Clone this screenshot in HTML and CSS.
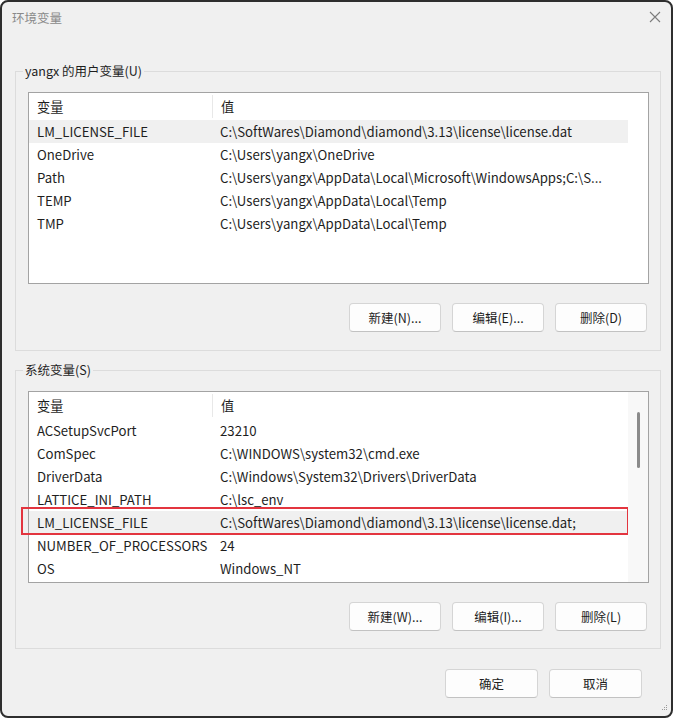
FILE: index.html
```html
<!DOCTYPE html>
<html lang="zh-CN">
<head>
  <meta charset="UTF-8">
  <meta name="viewport" content="width=device-width, initial-scale=1.0">
  <title>环境变量</title>
  <link rel="stylesheet" href="styles.css">
</head>
<body>
  <div class="window">
    <div class="titlebar">
      <span class="titlebar__text">环境变量</span>
      <svg class="titlebar__close" width="12" height="12" viewBox="0 0 12 12">
        <path d="M1 1 L11 11 M11 1 L1 11" stroke="#7c7c7c" stroke-width="1.1" fill="none"/>
      </svg>
    </div>

    <fieldset class="group group--user">
      <legend class="group__label">yangx 的用户变量(U)</legend>
      <div class="list">
        <div class="list__body">
          <div class="list__head">
            <div class="list__cell list__cell--name">变量</div>
            <div class="list__cell list__cell--value">值</div>
          </div>
          <div class="list__row list__row--selected">
            <div class="list__cell list__cell--name">LM_LICENSE_FILE</div>
            <div class="list__cell list__cell--value">C:\SoftWares\Diamond\diamond\3.13\license\license.dat</div>
          </div>
          <div class="list__row">
            <div class="list__cell list__cell--name">OneDrive</div>
            <div class="list__cell list__cell--value">C:\Users\yangx\OneDrive</div>
          </div>
          <div class="list__row">
            <div class="list__cell list__cell--name">Path</div>
            <div class="list__cell list__cell--value">C:\Users\yangx\AppData\Local\Microsoft\WindowsApps;C:\S...</div>
          </div>
          <div class="list__row">
            <div class="list__cell list__cell--name">TEMP</div>
            <div class="list__cell list__cell--value">C:\Users\yangx\AppData\Local\Temp</div>
          </div>
          <div class="list__row">
            <div class="list__cell list__cell--name">TMP</div>
            <div class="list__cell list__cell--value">C:\Users\yangx\AppData\Local\Temp</div>
          </div>
        </div>
        <div class="list__scroll"></div>
      </div>
      <div class="buttons">
        <button class="btn">新建(N)...</button>
        <button class="btn">编辑(E)...</button>
        <button class="btn">删除(D)</button>
      </div>
    </fieldset>

    <fieldset class="group group--system">
      <legend class="group__label">系统变量(S)</legend>
      <div class="list">
        <div class="list__body">
          <div class="list__head">
            <div class="list__cell list__cell--name">变量</div>
            <div class="list__cell list__cell--value">值</div>
          </div>
          <div class="list__row">
            <div class="list__cell list__cell--name">ACSetupSvcPort</div>
            <div class="list__cell list__cell--value">23210</div>
          </div>
          <div class="list__row">
            <div class="list__cell list__cell--name">ComSpec</div>
            <div class="list__cell list__cell--value">C:\WINDOWS\system32\cmd.exe</div>
          </div>
          <div class="list__row">
            <div class="list__cell list__cell--name">DriverData</div>
            <div class="list__cell list__cell--value">C:\Windows\System32\Drivers\DriverData</div>
          </div>
          <div class="list__row">
            <div class="list__cell list__cell--name">LATTICE_INI_PATH</div>
            <div class="list__cell list__cell--value">C:\lsc_env</div>
          </div>
          <div class="list__row list__row--selected list__row--marked">
            <div class="list__cell list__cell--name">LM_LICENSE_FILE</div>
            <div class="list__cell list__cell--value">C:\SoftWares\Diamond\diamond\3.13\license\license.dat;</div>
          </div>
          <div class="list__row">
            <div class="list__cell list__cell--name">NUMBER_OF_PROCESSORS</div>
            <div class="list__cell list__cell--value">24</div>
          </div>
          <div class="list__row">
            <div class="list__cell list__cell--name">OS</div>
            <div class="list__cell list__cell--value">Windows_NT</div>
          </div>
        </div>
        <div class="list__scroll list__scroll--track">
          <div class="list__thumb"></div>
        </div>
      </div>
      <div class="buttons">
        <button class="btn">新建(W)...</button>
        <button class="btn">编辑(I)...</button>
        <button class="btn">删除(L)</button>
      </div>
    </fieldset>

    <div class="footer">
      <button class="btn btn--wide">确定</button>
      <button class="btn btn--wide">取消</button>
    </div>

    <svg class="grip" width="8" height="8" viewBox="0 0 8 8">
      <rect x="6" y="0" width="1" height="1" fill="#9a9a9a"/>
      <rect x="4" y="2" width="1" height="1" fill="#9a9a9a"/>
      <rect x="6" y="2" width="1" height="1" fill="#9a9a9a"/>
      <rect x="2" y="4" width="1" height="1" fill="#9a9a9a"/>
      <rect x="4" y="4" width="1" height="1" fill="#9a9a9a"/>
      <rect x="6" y="4" width="1" height="1" fill="#9a9a9a"/>
    </svg>
  </div>
</body>
</html>
```

FILE: styles.css
```css
body{
  margin: 0;
  background: #fff;
  font-family: "Noto Sans CJK SC", "Noto Sans", sans-serif;
  font-size: 13.2px;
  color: #1e1e1e;
}

.window{
  position: relative;
  width: 673px;
  height: 718px;
  box-sizing: border-box;
  border: 2px solid #2e2e2e;
  border-radius: 8px;
  background: #f0f0f0;
  padding: 0 10px 0 13px;
  display: flex;
  flex-direction: column;
}

.titlebar{
  height: 30px;
  margin: 0 -10px 30px -13px;
  padding: 0 10px 0 10px;
  display: flex;
  align-items: center;
  justify-content: space-between;
}
.titlebar__text{
  color: #8a8a8a;
  font-size: 12.5px;
}

.group{
  margin: 0;
  padding: 12px 11px 18px 12px;
  border: 1px solid #dcdcdc;
  min-width: 0;
}
.group--system{
  margin-top: 10px;
  padding-bottom: 17px;
}
.group__label{
  padding: 0 2px;
  margin-left: -5px;
  line-height: 18px;
  font-size: 12.5px;
}

.list{
  height: 192px;
  box-sizing: border-box;
  border: 1px solid #a3a3a3;
  background: #fff;
  display: flex;
}
.list__body{
  flex: 1;
  min-width: 0;
}
.list__scroll{
  width: 20px;
  position: relative;
}
.list__scroll--track{
  background: #f8f8f8;
}
.list__thumb{
  position: absolute;
  left: 9px;
  top: 20px;
  width: 3px;
  height: 56px;
  border-radius: 2px;
  background: #8a8a8a;
}

.list__head{
  height: 27px;
  display: flex;
  align-items: center;
}
.list__head .list__cell--value{
  border-left: 1px solid #e8e8e8;
  height: 23px;
  line-height: 23px;
}

.list__row{
  height: 23px;
  display: flex;
  align-items: center;
}
.list__row--selected{
  background: #f0f0f0;
}
.list__row--marked{
  position: relative;
}
.list__row--marked::after{
  content: "";
  position: absolute;
  left: -8px;
  right: -1px;
  top: -4px;
  bottom: -1px;
  border: 2px solid #e3353f;
}

.list__cell{
  white-space: nowrap;
  overflow: hidden;
}
.list__cell--name{
  width: 175px;
  padding-left: 8px;
}
.list__cell--value{
  flex: 1;
  padding-left: 8px;
}

.buttons{
  margin-top: 19px;
  padding-right: 2px;
  display: flex;
  justify-content: flex-end;
  gap: 11px;
}

.btn{
  width: 92px;
  height: 29px;
  box-sizing: border-box;
  background: #fdfdfd;
  border: 1px solid #d5d5d5;
  border-bottom-color: #c2c2c2;
  border-radius: 4px;
  font-family: inherit;
  font-size: 12.5px;
  color: #1e1e1e;
  padding: 0;
}
.btn--wide{
  width: 93px;
}

.footer{
  margin-top: 20px;
  padding-right: 19px;
  display: flex;
  justify-content: flex-end;
  gap: 11px;
}

.grip{
  position: absolute;
  right: 3px;
  bottom: 3px;
}
```
